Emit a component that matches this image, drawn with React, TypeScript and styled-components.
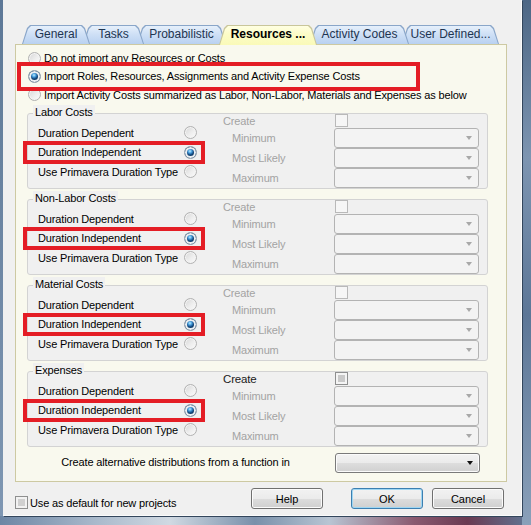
import React from "react";
import styled, { createGlobalStyle, css } from "styled-components";

const Global = createGlobalStyle`
  html, body { margin: 0; padding: 0; background: #f0f0f0; }
  body { font-family: "Liberation Sans", Arial, sans-serif; font-size: 11px; letter-spacing: -0.15px; color: #000; }
  * { box-sizing: border-box; }
`;

const Frame = styled.div`
  width: 531px;
  height: 525px;
  display: flex;
  padding: 0 9px 9px 3px;
  background:
    linear-gradient(180deg, #4d6785, #7d95b1 30%, #5d7797 60%, #8aa0b9) right top / 9px 100% no-repeat,
    linear-gradient(90deg, #6d86a4 0%, #a9b9cb 18%, #d0d9e2 32%, #7990aa 48%, #b8c5d3 62%, #8a5a70 78%, #6a3a52 88%, #5f7896 100%) left bottom / 100% 9px no-repeat,
    linear-gradient(180deg, #5d7897, #7f97b3);
`;

const Client = styled.div`
  flex: 1;
  display: flex;
  flex-direction: column;
  background: #f0f0f0;
  padding: 25px 14px 0 12px;
  border-right: 1px solid #fbfbfb;
  border-bottom: 1px solid #fbfbfb;
  box-shadow: 1px 1px 0 #33465c;
`;

const TabBar = styled.div`
  display: flex;
  align-items: flex-start;
  height: 19px;
  padding-left: 7px;
  position: relative;
  z-index: 2;
`;

const tabShape = "polygon(0 100%, 5px 3px, 8px 0, calc(100% - 8px) 0, calc(100% - 5px) 3px, 100% 100%)";

const Tab = styled.div<{ $w: number; $z: number; $active?: boolean }>`
  position: relative;
  width: ${(p) => p.$w}px;
  height: ${(p) => (p.$active ? 20 : 19)}px;
  z-index: ${(p) => p.$z};
  display: flex;
  align-items: flex-start;
  justify-content: center;
  padding-top: 2px;
  font-size: 12px;
  letter-spacing: 0;
  font-weight: ${(p) => (p.$active ? 700 : 400)};
  color: ${(p) => (p.$active ? "#000" : "#1e3551")};
  background: ${(p) => (p.$active ? "#c9c69a" : "#8aa6c9")};
  clip-path: ${tabShape};
  white-space: nowrap;
  &:not(:first-child) { margin-left: -7px; }
  &::before {
    content: "";
    position: absolute;
    inset: 1px 1px 0 1px;
    clip-path: ${tabShape};
    background: ${(p) =>
      p.$active
        ? "linear-gradient(180deg, #ffffe2 0%, #fcfcc6 45%, #fafab8 100%)"
        : "linear-gradient(180deg, #e6f0fb 0%, #cfe0f6 45%, #b9d1f1 100%)"};
  }
`;

const TabText = styled.span`
  position: relative;
`;

const Panel = styled.div`
  display: flex;
  flex-direction: column;
  height: 438px;
  border: 1px solid #cdc9a2;
  background: #f9f9ee;
  padding-top: 4px;
  position: relative;
  z-index: 1;
`;

const OptionRow = styled.div<{ $h?: number }>`
  position: relative;
  display: flex;
  align-items: center;
  gap: 3px;
  height: ${(p) => p.$h ?? 18}px;
  padding-left: 12px;
  white-space: nowrap;
`;

const Highlight = styled.div<{ $l: number; $t: number; $r: number; $b: number }>`
  position: absolute;
  left: ${(p) => p.$l}px;
  top: ${(p) => p.$t}px;
  right: ${(p) => p.$r}px;
  bottom: ${(p) => p.$b}px;
  border: 4px solid #e41d25;
  pointer-events: none;
  z-index: 3;
`;

const Radio = styled.span<{ $checked?: boolean }>`
  flex: none;
  display: inline-block;
  width: 13px;
  height: 13px;
  border-radius: 50%;
  border: 1px solid ${(p) => (p.$checked ? "#8c9aa8" : "#b2b2b2")};
  ${(p) =>
    p.$checked
      ? css`
          background: radial-gradient(circle at 45% 38%, #c4ecff 0, #5aaee6 1.5px, #1f64a3 3px, #103e6c 4px, #103e6c 100%);
          box-shadow: inset 0 0 0 2px #eceff2;
        `
      : css`
          background: linear-gradient(135deg, #d6d6d6 0%, #eeeeee 55%, #fbfbfb 100%);
          box-shadow: inset 0 0 0 1px #f4f4f4;
        `}
`;

const Group = styled.div<{ $first?: boolean }>`
  position: relative;
  height: 76px;
  margin: ${(p) => (p.$first ? 9 : 10)}px 18px 0 11px;
  border: 1px solid #d3d3d3;
  border-radius: 3px;
  background: #f0f0f0;
  display: grid;
  grid-template-columns: 177px 256px;
  column-gap: 18px;
`;

const GroupTitle = styled.span`
  position: absolute;
  left: 5px;
  top: -9px;
  padding: 0 2px;
  line-height: 14px;
  background: #f0f0f0;
  white-space: nowrap;
`;

const LeftCol = styled.div`
  padding-top: 9px;
`;

const GroupRow = styled.div`
  position: relative;
  display: grid;
  grid-template-columns: 146px 13px;
  align-items: center;
  height: 19.5px;
  padding-left: 10px;
  white-space: nowrap;
`;

const RightCol = styled.div`
  display: grid;
  grid-template-columns: 111px 145px;
  grid-template-rows: 14px 20px 20px 20px;
  align-items: center;
`;

const CreateLabel = styled.span<{ $enabled?: boolean }>`
  color: ${(p) => (p.$enabled ? "#1a1a1a" : "#a3a3a3")};
  font-size: ${(p) => (p.$enabled ? 11.5 : 11)}px;
`;

const FieldLabel = styled.span`
  color: #a3a3a3;
  padding-left: 9px;
  white-space: nowrap;
`;

const Check = styled.span<{ $enabled?: boolean }>`
  display: inline-block;
  width: 13px;
  height: 13px;
  align-self: start;
  margin-left: 1px;
  border: 1px solid ${(p) => (p.$enabled ? "#8e8f8f" : "#b9b9b9")};
  background: #f6f6f6;
  ${(p) =>
    p.$enabled &&
    css`
      box-shadow: inset 0 0 0 2px #f4f4f4, inset 0 0 0 8px #c9c9c9;
    `}
`;

const Combo = styled.div<{ $enabled?: boolean }>`
  height: 20px;
  display: flex;
  align-items: center;
  justify-content: flex-end;
  padding-right: 6px;
  border-radius: 3px;
  ${(p) =>
    p.$enabled
      ? css`
          border: 1px solid #7a7a7a;
          background: linear-gradient(180deg, #f3f3f3 0%, #ebebeb 50%, #dedede 50%, #d0d0d0 100%);
          box-shadow: inset 0 0 0 1px #fbfbfb;
        `
      : css`
          border: 1px solid #b3b3b3;
          background: #f3f3f3;
        `}
`;

const Arrow = styled.span<{ $enabled?: boolean }>`
  width: 0;
  height: 0;
  border-left: 3.5px solid transparent;
  border-right: 3.5px solid transparent;
  border-top: 4px solid ${(p) => (p.$enabled ? "#111" : "#a8a8a8")};
`;

const AltRow = styled.div`
  display: grid;
  grid-template-columns: 319px 145px;
  align-items: center;
  height: 20px;
  margin-top: 6px;
`;

const AltLabel = styled.span`
  text-align: center;
  white-space: nowrap;
  padding-bottom: 2px;
`;

const BottomBar = styled.div`
  display: flex;
  align-items: flex-start;
  padding: 6px 3px 0 0;
`;

const DefaultOption = styled.label`
  display: flex;
  align-items: center;
  gap: 2px;
  margin-top: 8px;
  white-space: nowrap;
`;

const BigCheck = styled.span`
  display: inline-block;
  width: 13px;
  height: 13px;
  border: 1px solid #8e8f8f;
  background: #f4f4f4;
  box-shadow: inset 0 0 0 2px #f2f2f2, inset 0 0 0 8px #d0d0d0;
`;

const Button = styled.button<{ $default?: boolean; $gap?: number; $push?: boolean }>`
  width: 72px;
  height: 21px;
  margin-left: ${(p) => (p.$push ? "auto" : `${p.$gap ?? 0}px`)};
  padding: 0;
  font-family: inherit;
  font-size: 11px;
  color: #000;
  border-radius: 3px;
  border: 1px solid ${(p) => (p.$default ? "#3c7fb1" : "#707070")};
  background: linear-gradient(180deg, #f2f2f2 0%, #ebebeb 50%, #dddddd 50%, #cfcfcf 100%);
  box-shadow: inset 0 0 0 1px ${(p) => (p.$default ? "#9fd6f2" : "#fbfbfb")};
`;

const tabs = [
  { label: "General", w: 68 },
  { label: "Tasks", w: 61 },
  { label: "Probabilistic", w: 89 },
  { label: "Resources ...", w: 98, active: true },
  { label: "Activity Codes", w: 99 },
  { label: "User Defined...", w: 97 },
];

const groups = [
  { title: "Labor Costs", enabled: false },
  { title: "Non-Labor Costs", enabled: false },
  { title: "Material Costs", enabled: false },
  { title: "Expenses", enabled: true },
];

const durationRows = ["Duration Dependent", "Duration Independent", "Use Primavera Duration Type"];
const fields = ["Minimum", "Most Likely", "Maximum"];

export default function App() {
  return (
    <>
      <Global />
      <Frame>
        <Client>
          <TabBar>
            {tabs.map((t, i) => (
              <Tab key={t.label} $w={t.w} $active={t.active} $z={t.active ? 20 : 10 - i}>
                <TabText>{t.label}</TabText>
              </Tab>
            ))}
          </TabBar>
          <Panel>
            <OptionRow>
              <Radio />
              <span>Do not import any Resources or Costs</span>
            </OptionRow>
            <OptionRow>
              <Radio $checked />
              <span>Import Roles, Resources, Assignments and Activity Expense Costs</span>
              <Highlight $l={1} $t={-5} $r={86} $b={-6} />
            </OptionRow>
            <OptionRow $h={19}>
              <Radio />
              <span>Import Activity Costs summarized as Labor, Non-Labor, Materials and Expenses as below</span>
            </OptionRow>

            {groups.map((g, gi) => (
              <Group key={g.title} $first={gi === 0}>
                <GroupTitle>{g.title}</GroupTitle>
                <LeftCol>
                  {durationRows.map((r, ri) => (
                    <GroupRow key={r}>
                      <span>{r}</span>
                      <Radio $checked={ri === 1} />
                      {ri === 1 && <Highlight $l={-5} $t={-2} $r={0} $b={-2} />}
                    </GroupRow>
                  ))}
                </LeftCol>
                <RightCol>
                  <CreateLabel $enabled={g.enabled}>Create</CreateLabel>
                  <Check $enabled={g.enabled} />
                  {fields.map((f) => (
                    <React.Fragment key={f}>
                      <FieldLabel>{f}</FieldLabel>
                      <Combo>
                        <Arrow />
                      </Combo>
                    </React.Fragment>
                  ))}
                </RightCol>
              </Group>
            ))}

            <AltRow>
              <AltLabel>Create alternative distributions from a function in</AltLabel>
              <Combo $enabled>
                <Arrow $enabled />
              </Combo>
            </AltRow>
          </Panel>
          <BottomBar>
            <DefaultOption>
              <BigCheck />
              <span>Use as default for new projects</span>
            </DefaultOption>
            <Button $push>Help</Button>
            <Button $default $gap={28}>OK</Button>
            <Button $gap={9}>Cancel</Button>
          </BottomBar>
        </Client>
      </Frame>
    </>
  );
}
